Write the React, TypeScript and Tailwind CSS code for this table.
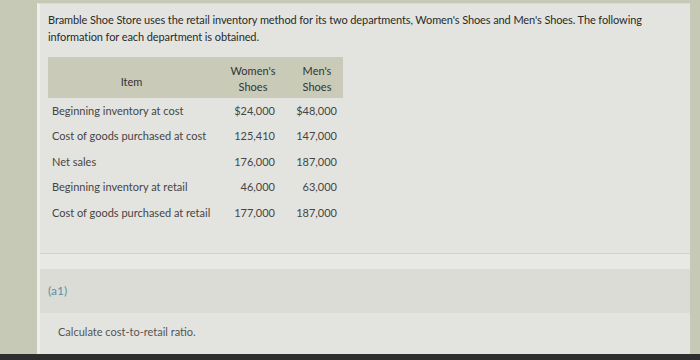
import React from "react";

const rows = [
  ["Beginning inventory at cost", "$24,000", "$48,000"],
  ["Cost of goods purchased at cost", "125,410", "147,000"],
  ["Net sales", "176,000", "187,000"],
  ["Beginning inventory at retail", "46,000", "63,000"],
  ["Cost of goods purchased at retail", "177,000", "187,000"],
];

export default function App() {
  return (
    <div
      className="w-[700px] h-[360px] bg-[#c6c9b5] flex flex-col overflow-hidden"
      style={{ fontFamily: "Lato, 'Open Sans', sans-serif" }}
    >
      <div className="flex flex-1 pt-[3px]">
        <div className="w-[37px] shrink-0" />
        <div className="w-[653px] flex flex-col bg-[#e3e4df] border-l-[3px] border-[#eeefeb] border-t border-t-[#d8d9d3]">
          <div className="flex flex-col h-[249px]">
            <p className="pl-[8px] pt-[7px] text-[11px] leading-[17px] text-[#2a2a2a] tracking-[-0.1px]">
              Bramble Shoe Store uses the retail inventory method for its two departments, Women's Shoes and Men's Shoes. The following
              <br />
              information for each department is obtained.
            </p>
            <div className="ml-[8px] mt-[12px] w-[295px] flex flex-col text-[11px]">
              <div className="flex h-[41px] bg-[#c9cbb8] text-[#333]">
                <div className="w-[167px] flex items-end justify-center pb-[8px]">Item</div>
                <div className="w-[76px] flex flex-col items-center justify-center leading-[16px] pt-[2px]">
                  <span>Women's</span>
                  <span>Shoes</span>
                </div>
                <div className="w-[52px] flex flex-col items-center justify-center leading-[16px] pt-[2px]">
                  <span>Men's</span>
                  <span>Shoes</span>
                </div>
              </div>
              {rows.map((r) => (
                <div key={r[0]} className="flex h-[25.5px] items-center text-[#454545]">
                  <div className="w-[167px] pl-[4px] whitespace-nowrap">{r[0]}</div>
                  <div className="w-[76px] text-right pr-[16px]">{r[1]}</div>
                  <div className="w-[52px] text-right pr-[6px]">{r[2]}</div>
                </div>
              ))}
            </div>
          </div>
          <div className="h-[16px] bg-[#e8e9e4] border-t border-[#d0d1cb]" />
          <div className="h-[44px] bg-[#dbdcd6] flex items-center pl-[8px] text-[12px] text-[#5e8ea0]">
            (a1)
          </div>
          <div className="flex-1 bg-[#e3e4df] flex items-center pl-[18px] pb-[2px] text-[11px] text-[#555]">
            Calculate cost-to-retail ratio.
          </div>
        </div>
        <div className="flex-1" />
      </div>
      <div className="h-[6px] bg-[#2e2e2e]" />
    </div>
  );
}
